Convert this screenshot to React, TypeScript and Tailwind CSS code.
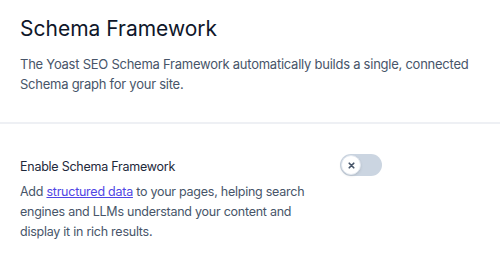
import { useState } from 'react'

export default function App() {
  const [enabled, setEnabled] = useState(false)

  return (
    <div className="w-[500px] h-[264px] bg-white font-['Inter','Liberation_Sans',sans-serif] overflow-hidden">
      <div className="px-5 pt-[14px] pb-[28px]">
        <h1 className="text-[21px] leading-[30px] font-normal text-[#0f172a]">Schema Framework</h1>
        <p className="mt-[10px] text-[13px] leading-5 tracking-[-0.25px] text-[#475569]">
          The Yoast SEO Schema Framework automatically builds a single, connected Schema graph for your site.
        </p>
      </div>
      <div className="h-[2px] bg-[#eef0f4]" />
      <div className="flex items-start px-5 pt-[33px]">
        <div className="w-[290px]">
          <div className="text-[12.5px] leading-5 tracking-[-0.25px] text-[#1e293b]">Enable Schema Framework</div>
          <p className="mt-[5px] text-[12.5px] leading-5 tracking-[-0.25px] text-[#475569]">
            Add{' '}
            <a href="#" className="text-[#4f46e5] underline">structured data</a>{' '}
            to your pages, helping search engines and LLMs understand your content and display it in rich results.
          </p>
        </div>
        <button
          onClick={() => setEnabled(!enabled)}
          className="ml-[30px] mt-[-3px] w-[42px] h-[22px] rounded-full bg-[#cbd5e1] p-[1px] flex items-center shrink-0"
          aria-label="Enable Schema Framework"
        >
          <span className="w-5 h-5 rounded-full bg-white border border-[#e2e8f0] shadow-sm flex items-center justify-center">
            <svg className="w-[9px] h-[9px] text-[#475569]" fill="none" viewBox="0 0 24 24" stroke="currentColor" strokeWidth={4.5}>
              <path strokeLinecap="round" strokeLinejoin="round" d="M6 6l12 12M18 6L6 18" />
            </svg>
          </span>
        </button>
      </div>
    </div>
  )
}
